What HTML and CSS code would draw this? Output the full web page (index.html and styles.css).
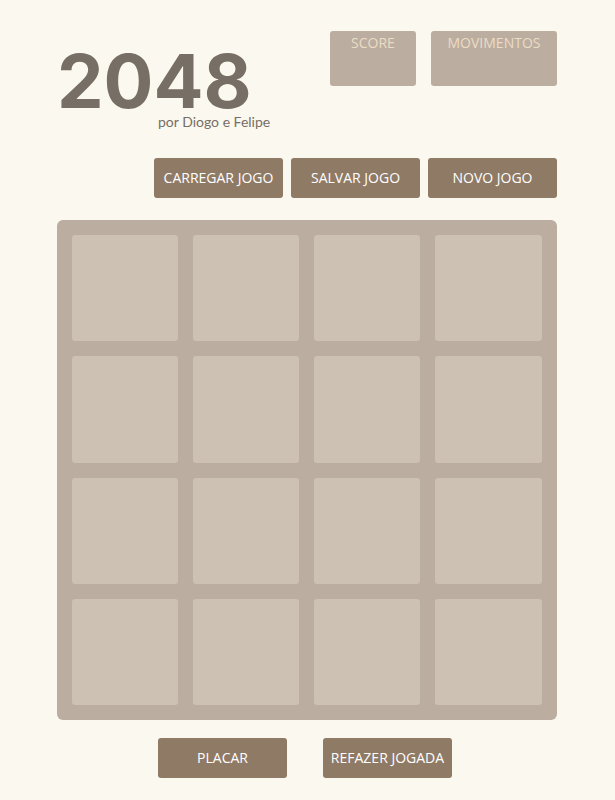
FILE: index.html
```html
<!DOCTYPE html>
<html lang="pt-BR">
<head>
<meta charset="utf-8">
<meta name="viewport" content="width=device-width, initial-scale=1">
<title>2048</title>
<link rel="stylesheet" href="styles.css">
</head>
<body>
<main class="game">
  <header class="header">
    <div class="brand">
      <h1 class="title">2048</h1>
      <p class="byline">por Diogo e Felipe</p>
    </div>
    <div class="stats">
      <section class="stat"><h2 class="stat-label">SCORE</h2></section>
      <section class="stat stat-wide"><h2 class="stat-label">MOVIMENTOS</h2></section>
    </div>
  </header>
  <nav class="actions">
    <button class="button" type="button">CARREGAR JOGO</button>
    <button class="button" type="button">SALVAR JOGO</button>
    <button class="button" type="button">NOVO JOGO</button>
  </nav>
  <div class="board">
    <div class="cell"></div><div class="cell"></div><div class="cell"></div><div class="cell"></div>
    <div class="cell"></div><div class="cell"></div><div class="cell"></div><div class="cell"></div>
    <div class="cell"></div><div class="cell"></div><div class="cell"></div><div class="cell"></div>
    <div class="cell"></div><div class="cell"></div><div class="cell"></div><div class="cell"></div>
  </div>
  <footer class="footer">
    <button class="button" type="button">PLACAR</button>
    <button class="button" type="button">REFAZER JOGADA</button>
  </footer>
</main>
</body>
</html>
```

FILE: styles.css
```css
* {
  box-sizing: border-box;
}

body {
  margin: 0;
  background: #fbf8ef;
  color: #776e65;
  font-family: "Open Sans", "Noto Sans", sans-serif;
  font-size: 14px;
}

.game {
  padding: 31px 58px 22px 57px;
}

.header {
  display: flex;
  justify-content: space-between;
  align-items: flex-start;
}

.brand {
  padding-top: 20px;
}

.title {
  margin: 0;
  font-family: Inter, sans-serif;
  font-size: 74px;
  font-weight: 700;
  line-height: 61px;
}

.byline {
  margin: 0;
  padding-left: 101px;
  font-family: Lato, sans-serif;
  line-height: 20px;
}

.stats {
  display: flex;
  gap: 15px;
}

.stat {
  width: 86px;
  height: 55px;
  padding-top: 2px;
  border-radius: 3px;
  background: #bbada0;
  text-align: center;
}

.stat-wide {
  width: 126px;
}

.stat-label {
  margin: 0;
  color: #ebdcc5;
  font-size: 14px;
  font-weight: 400;
  line-height: 20px;
}

.actions {
  display: flex;
  justify-content: flex-end;
  gap: 8px;
  margin-top: 26px;
}

.button {
  width: 129px;
  height: 40px;
  padding: 0 0 2px;
  border: 0;
  border-radius: 3px;
  background: #8f7a66;
  color: #fff;
  font: inherit;
  white-space: nowrap;
}

.board {
  display: grid;
  grid-template-columns: 106fr 106fr 106fr 107fr;
  grid-template-rows: repeat(4, 1fr);
  gap: 15px;
  aspect-ratio: 1;
  margin-top: 22px;
  padding: 15px;
  border-radius: 6px;
  background: #bbada0;
}

.cell {
  border-radius: 3px;
  background: #cdc1b4;
}

.footer {
  display: flex;
  justify-content: center;
  gap: 36px;
  margin-top: 18px;
  padding-right: 4px;
}
```
